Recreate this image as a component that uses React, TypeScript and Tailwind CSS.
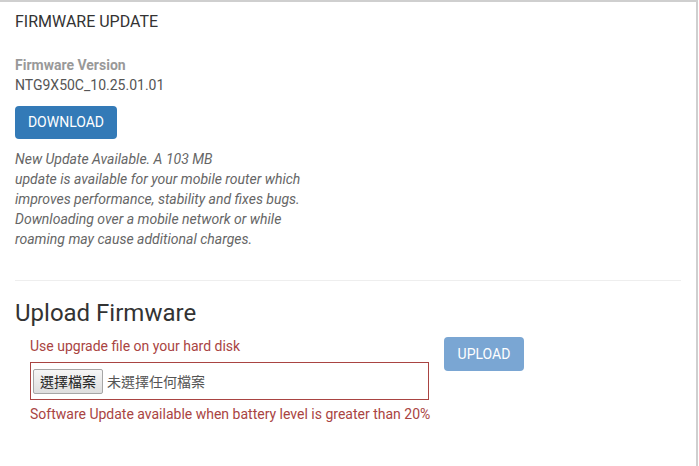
export default function App() {
  const font = { fontFamily: 'Roboto, "Noto Sans CJK TC", sans-serif' };
  return (
    <div className="w-[699px] h-[466px] bg-white overflow-hidden" style={font}>
      <div className="w-[698px] h-[466px] border-t-2 border-r-2 border-[#cfcfcf] bg-white px-[15px]">
        <h3 className="text-[16px] leading-[20px] text-[#333] mt-[10px] uppercase">Firmware Update</h3>
        <div className="mt-[23px] text-[14px] leading-[20px] font-bold text-[#999]">Firmware Version</div>
        <div className="text-[14px] leading-[20px] text-[#555]">NTG9X50C_10.25.01.01</div>
        <button className="mt-[11px] h-[33px] w-[102px] rounded-[4px] bg-[#337ab7] text-white text-[14px] uppercase flex items-center justify-center">
          Download
        </button>
        <div className="mt-[10px] text-[14px] leading-[20px] italic text-[#666]">
          <div>New Update Available. A 103 MB</div>
          <div>update is available for your mobile router which</div>
          <div>improves performance, stability and fixes bugs.</div>
          <div>Downloading over a mobile network or while</div>
          <div>roaming may cause additional charges.</div>
        </div>
        <div className="mt-[31px] h-px w-[666px] bg-[#eeeeee]" />
        <h2 className="mt-[19px] text-[24px] leading-[26px] text-[#333]">Upload Firmware</h2>
        <div className="flex items-start mt-[10px] pl-[15px]">
          <div className="w-[399px]">
            <div className="text-[14px] leading-[20px] text-[#a94442]">Use upgrade file on your hard disk</div>
            <div className="mt-[6px] h-[38px] border border-[#a94442] flex items-center pl-[2px]">
              <span
                className="h-[25px] px-[6px] flex items-center text-[14px] text-[#222] border border-[#a6a6a6] rounded-[2px] bg-gradient-to-b from-[#f6f6f6] to-[#dedede]"
                style={{ fontFamily: '"Noto Sans CJK TC", sans-serif' }}
              >
                選擇檔案
              </span>
              <span
                className="ml-[4px] text-[14px] text-[#555]"
                style={{ fontFamily: '"Noto Sans CJK TC", sans-serif' }}
              >
                未選擇任何檔案
              </span>
            </div>
            <div className="mt-[4px] text-[14px] leading-[20px] text-[#a94442] whitespace-nowrap">
              Software Update available when battery level is greater than 20%
            </div>
          </div>
          <button className="ml-[15px] mt-[1px] h-[34px] w-[80px] rounded-[4px] bg-[#7aa6d3] text-white text-[14px] uppercase flex items-center justify-center">
            Upload
          </button>
        </div>
      </div>
    </div>
  );
}
